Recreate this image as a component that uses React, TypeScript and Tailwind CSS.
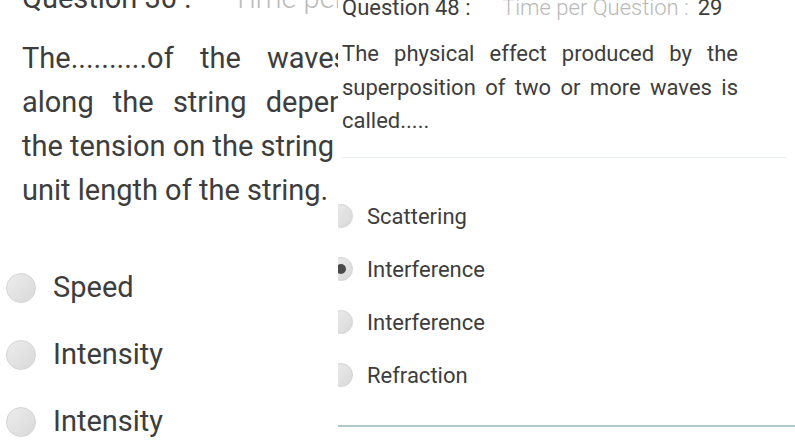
const ink = "text-[#3d3d3d]"

const Radio = ({ size, checked }: { size: string; checked?: boolean }) => (
    <span className={`${size} shrink-0 rounded-full border border-[#d4d4d4] bg-gradient-to-br from-[#ececec] to-[#d9d9d9] flex items-center justify-center`}>
        {checked && <span className="w-[10px] h-[10px] rounded-full bg-[#4a4a4a]" />}
    </span>
)

const leftOptions = ["Speed", "Intensity", "Intensity"]
const rightOptions = ["Scattering", "Interference", "Interference", "Refraction"]

const App = () => {
    return (
        <div className="w-[795px] h-[447px] bg-white flex overflow-hidden font-['Roboto',sans-serif]">
            {/* left screenshot, cut off at the right */}
            <div className="w-[338px] shrink-0 overflow-hidden flex flex-col">
                <div className="-mt-[16px] flex text-[29px] leading-[29px] whitespace-nowrap">
                    <span className={`w-[232px] shrink-0 pl-[22px] ${ink}`}>Question 30 :</span>
                    <span className="font-light text-[#bcbcbc]">Time per Question : 31</span>
                </div>
                <div className={`mt-[23px] pl-[22px] text-[29px] leading-[44px] whitespace-nowrap ${ink}`}>
                    <div className="[word-spacing:19px]">The..........of the waves travelling</div>
                    <div className="[word-spacing:12px]">along the string depends on</div>
                    <div>the tension on the string and mass per</div>
                    <div>unit length of the string.</div>
                </div>
                <div className="h-[2px] bg-[#edf1f3]" />
                <div className="mt-[42px] flex flex-col">
                    {leftOptions.map((o, i) => (
                        <div key={i} className="h-[67px] flex items-center pl-[6px] gap-[17px]">
                            <Radio size="w-[30px] h-[30px]" />
                            <span className={`text-[29px] ${ink}`}>{o}</span>
                        </div>
                    ))}
                </div>
            </div>

            {/* right screenshot */}
            <div className="flex-1 overflow-hidden flex flex-col pl-[4px]">
                <div className="-mt-[3px] flex text-[22px] leading-[22px] whitespace-nowrap">
                    <span className={`w-[160px] shrink-0 ${ink}`}>Question 48 :</span>
                    <span className="font-light text-[#b8b8b8]">Time per Question :</span>
                    <span className={`ml-[9px] ${ink}`}>29</span>
                </div>
                <div className={`mt-[18px] w-[396px] text-[22px] leading-[33.5px] whitespace-nowrap ${ink}`}>
                    <div className="text-justify [text-align-last:justify]">The physical effect produced by the</div>
                    <div className="text-justify [text-align-last:justify]">superposition of two or more waves is</div>
                    <div>called.....</div>
                </div>
                <div className="mt-[19px] w-[445px] h-px bg-[#e9eef0]" />
                <div className="mt-[32px] flex flex-col -ml-[13px]">
                    {rightOptions.map((o, i) => (
                        <div key={i} className="h-[53px] flex items-center gap-[14px]">
                            <Radio size="w-[24px] h-[24px]" checked={i === 1} />
                            <span className={`text-[22px] ${ink}`}>{o}</span>
                        </div>
                    ))}
                </div>
                <div className="mt-[23px] -ml-[5px] h-[2px] bg-[#b2c8d0]" />
            </div>
        </div>
    )
}

export default App
